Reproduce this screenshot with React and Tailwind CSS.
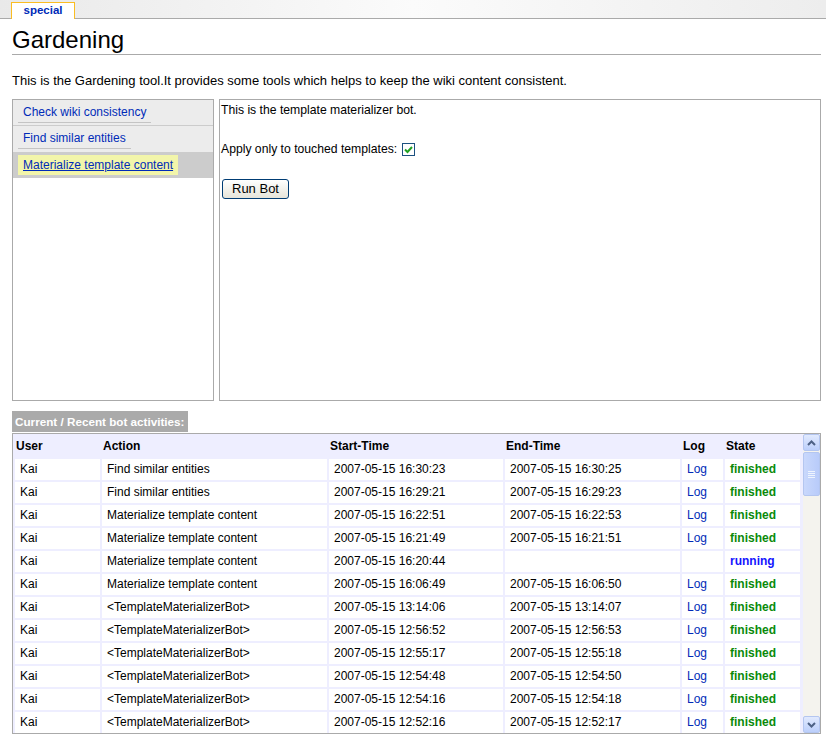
import React from 'react';

const rows = [
  ['Kai', 'Find similar entities', '2007-05-15 16:30:23', '2007-05-15 16:30:25', 'finished'],
  ['Kai', 'Find similar entities', '2007-05-15 16:29:21', '2007-05-15 16:29:23', 'finished'],
  ['Kai', 'Materialize template content', '2007-05-15 16:22:51', '2007-05-15 16:22:53', 'finished'],
  ['Kai', 'Materialize template content', '2007-05-15 16:21:49', '2007-05-15 16:21:51', 'finished'],
  ['Kai', 'Materialize template content', '2007-05-15 16:20:44', '', 'running'],
  ['Kai', 'Materialize template content', '2007-05-15 16:06:49', '2007-05-15 16:06:50', 'finished'],
  ['Kai', '<TemplateMaterializerBot>', '2007-05-15 13:14:06', '2007-05-15 13:14:07', 'finished'],
  ['Kai', '<TemplateMaterializerBot>', '2007-05-15 12:56:52', '2007-05-15 12:56:53', 'finished'],
  ['Kai', '<TemplateMaterializerBot>', '2007-05-15 12:55:17', '2007-05-15 12:55:18', 'finished'],
  ['Kai', '<TemplateMaterializerBot>', '2007-05-15 12:54:48', '2007-05-15 12:54:50', 'finished'],
  ['Kai', '<TemplateMaterializerBot>', '2007-05-15 12:54:16', '2007-05-15 12:54:18', 'finished'],
  ['Kai', '<TemplateMaterializerBot>', '2007-05-15 12:52:16', '2007-05-15 12:52:17', 'finished'],
];

const ScrollButton = ({ up }) => (
  <div className="h-[17px] w-[17px] rounded-[2px] border border-[#b4c6f0] bg-gradient-to-b from-[#e1eafe] to-[#bccffb] flex items-center justify-center">
    <svg width="9" height="6" viewBox="0 0 9 6">
      <path
        d={up ? 'M1 5 L4.5 1.5 L8 5' : 'M1 1 L4.5 4.5 L8 1'}
        fill="none"
        stroke="#4d6185"
        strokeWidth="2"
      />
    </svg>
  </div>
);

const App = () => {
  return (
    <div className="min-h-screen bg-white text-black font-['Liberation_Sans',Arial,sans-serif]">
      {/* top strip with tab */}
      <div className="h-[19px] border-b border-[#aaaaaa] bg-gradient-to-r from-[#e9e9e9] via-[#fbfbfb] to-[#ededed] flex items-end pl-[11px]">
        <div className="relative z-10 -mb-px h-[17px] w-[64px] border-t border-l border-r border-[#fabd23] bg-white text-center text-[11.5px] font-bold leading-[15px] text-[#002bb8]">
          special
        </div>
      </div>

      <div className="pl-[12px] pr-[5px]">
        {/* title */}
        <h1 className="mt-[7px] border-b border-[#aaaaaa] text-[24px] leading-[28px] font-normal">Gardening</h1>

        <p className="mt-[18px] text-[13px] leading-[16px]">
          This is the Gardening tool.It provides some tools which helps to keep the wiki content consistent.
        </p>

        {/* panels */}
        <div className="mt-[10px] flex gap-[5px] h-[302px]">
          <div className="w-[202px] border border-[#aaaaaa] text-[12px] leading-[16px]">
            <div className="bg-[#ececec] border-b border-[#cccccc] pt-[2px] pb-[2px] pl-[5px]">
              <span className="inline-block px-[5px] py-[2px] border-b border-[#c4c4c4] text-[#002bb8]">Check wiki consistency</span>
            </div>
            <div className="bg-[#ececec] pt-[2px] pb-[3px] pl-[5px]">
              <span className="inline-block px-[5px] py-[2px] border-b border-[#c4c4c4] text-[#002bb8]">Find similar entities</span>
            </div>
            <div className="bg-[#cccccc] pt-[3px] pb-[3px] pl-[5px]">
              <span className="inline-block px-[5px] py-[2px] bg-[#f2f5aa] text-[#002bb8] underline">Materialize template content</span>
            </div>
          </div>

          <div className="flex-1 border border-[#aaaaaa] pl-[1px] pt-[2px] text-[12.2px] leading-[16px]">
            <p>This is the template materializer bot.</p>
            <div className="mt-[23px] flex items-center">
              <span>Apply only to touched templates:</span>
              <span className="ml-[5px] h-[13px] w-[13px] border border-[#1c5180] bg-white flex items-center justify-center">
                <svg width="9" height="9" viewBox="0 0 9 9">
                  <path d="M1 4.5 L3.5 7 L8 2" fill="none" stroke="#21a121" strokeWidth="2" />
                </svg>
              </span>
            </div>
            <button className="mt-[22px] ml-[1px] h-[20px] w-[67px] rounded-[3px] border border-[#003c74] bg-gradient-to-b from-white to-[#e6e4da] text-[13px] leading-[18px]">
              Run Bot
            </button>
          </div>
        </div>

        {/* activities */}
        <div className="mt-[8px]">
          <div className="inline-block bg-[#aaaaaa] px-[3px] text-[11.7px] leading-[21px] font-bold text-white">
            Current / Recent bot activities:
          </div>
          <div className="flex h-[301px] border border-[#aaaaaa] bg-[#eeeeff] overflow-hidden">
            <div className="flex-1 overflow-hidden">
              <table className="table-fixed border-separate border-spacing-[2px] text-[12px] leading-[21px] w-[789px]">
                <colgroup>
                  <col className="w-[85px]" />
                  <col className="w-[225px]" />
                  <col className="w-[174px]" />
                  <col className="w-[175px]" />
                  <col className="w-[41px]" />
                  <col className="w-[75px]" />
                </colgroup>
                <thead>
                  <tr className="h-[21px] text-left font-bold">
                    <th className="pl-[1px] p-0">User</th>
                    <th className="pl-[1px] p-0">Action</th>
                    <th className="pl-[1px] p-0">Start-Time</th>
                    <th className="pl-[1px] p-0">End-Time</th>
                    <th className="pl-[1px] p-0">Log</th>
                    <th className="pl-[1px] p-0">State</th>
                  </tr>
                </thead>
                <tbody>
                  {rows.map((r, i) => (
                    <tr key={i} className="h-[21px]">
                      <td className="bg-white pl-[5px] whitespace-nowrap">{r[0]}</td>
                      <td className="bg-white pl-[5px] whitespace-nowrap">{r[1]}</td>
                      <td className="bg-white pl-[5px] whitespace-nowrap">{r[2]}</td>
                      <td className="bg-white pl-[5px] whitespace-nowrap">{r[3]}</td>
                      <td className="bg-white pl-[5px] text-[#002bb8]">{r[4] === 'finished' ? 'Log' : ''}</td>
                      <td
                        className={`bg-white pl-[5px] font-bold ${
                          r[4] === 'running' ? 'text-[#1414ff]' : 'text-[#0b8a0b]'
                        }`}
                      >
                        {r[4]}
                      </td>
                    </tr>
                  ))}
                </tbody>
              </table>
            </div>

            {/* scrollbar */}
            <div className="w-[17px] flex flex-col bg-[#f4f3ee]">
              <ScrollButton up />
              <div className="mt-[1px] h-[44px] rounded-[2px] border border-[#b4c6f0] bg-gradient-to-r from-[#c9d8fc] to-[#b8cbfa] flex flex-col items-center justify-center gap-[1px]">
                <div className="h-px w-[7px] bg-[#eef4fe]" />
                <div className="h-px w-[7px] bg-[#eef4fe]" />
                <div className="h-px w-[7px] bg-[#eef4fe]" />
                <div className="h-px w-[7px] bg-[#eef4fe]" />
              </div>
              <div className="flex-1" />
              <ScrollButton />
            </div>
          </div>
        </div>
      </div>
    </div>
  );
};

export default App;
